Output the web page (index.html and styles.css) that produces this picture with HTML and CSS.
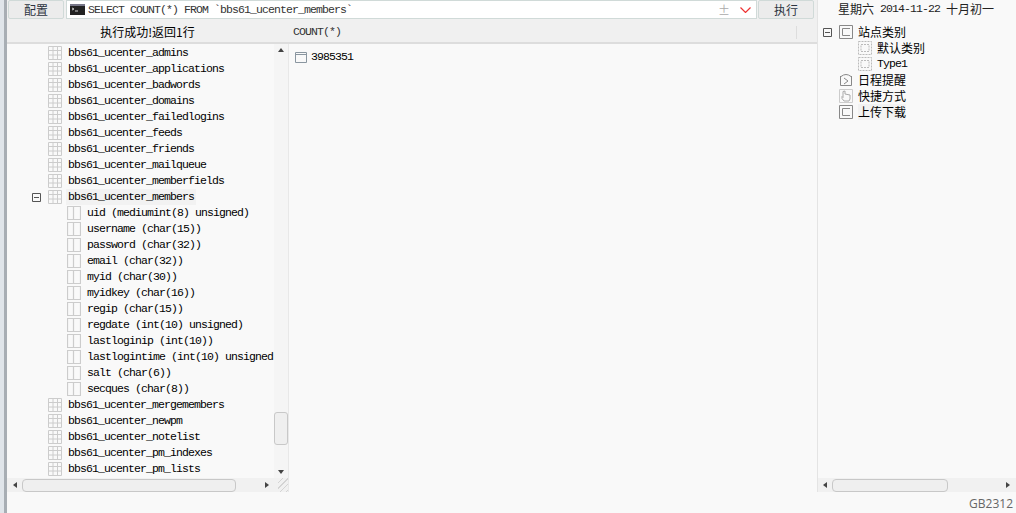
FILE: index.html
```html
<!DOCTYPE html>
<html lang="zh">
<head>
<meta charset="utf-8">
<title>SQL</title>
<link rel="stylesheet" href="styles.css">
</head>
<body>
<svg class="defs" width="0" height="0" aria-hidden="true">
  <symbol id="tbl" viewBox="0 0 14 14"><path d="M.5.5h13v13H.5zM.5 4.500h13M.5 9h13M5 .5v13M9.500.5v13" fill="none" stroke="#ccc"/></symbol>
  <symbol id="fld" viewBox="0 0 14 14"><path d="M.5.500h13v13H.5zM6.500.5v13" fill="none" stroke="#ccc" stroke-width="1.200"/></symbol>
  <symbol id="box" viewBox="0 0 14 14"><path d="M.5.500h13v13H.5zM11 3.500H3.500v7H11" fill="none" stroke="#888"/></symbol>
  <symbol id="dot" viewBox="0 0 14 14"><path d="M.5.500h13v13H.5zM3 3.500h8v7H3z" fill="none" stroke="#bbb" stroke-dasharray="2 1"/></symbol>
  <symbol id="clk" viewBox="0 0 14 14"><path d="M2 3.500Q7-.500 12 3.500M1.500 3v9.500h11V3" fill="none" stroke="#888"/><path d="M5 5l4 3-4 3" fill="none" stroke="#888"/></symbol>
  <symbol id="hand" viewBox="0 0 14 14"><path d="M.5.500h13v13H.5z" fill="none" stroke="#ccc"/><path d="M4 2.500v6l-1-1v2l2 2.500h5l1-2v-4l-5-1v-3z" fill="none" stroke="#aaa"/></symbol>
  <symbol id="minus" viewBox="0 0 9 9"><path d="M.5.500h8v8h-8zM2 4.500h5" fill="none" stroke="#555"/></symbol>
</svg>

<div class="shell">
<header class="topbar">
  <button class="btn btn-config">配置</button>
  <div class="sql">
    <svg class="term" viewBox="0 0 15 11"><rect width="15" height="11" fill="#222"/><rect width="15" height="2" fill="#778"/><path d="M2 4l2 1-2 1M5 7h3" stroke="#ccc" fill="none"/></svg>
    <span class="sql-text">SELECT COUNT(*) FROM `bbs61_ucenter_members`</span>
    <span class="sql-pm">±</span>
    <svg class="sql-arrow" viewBox="0 0 11 6"><path d="M.5.500l5 5 5-5" fill="none" stroke="#e33" stroke-width="1.200"/></svg>
  </div>
  <button class="btn btn-run">执行</button>
  <div class="date"><span>星期六</span><span class="mono">2014-11-22</span><span>十月初一</span></div>
</header>

<main class="main">
  <section class="left">
    <div class="status">执行成功!返回1行</div>
    <div class="tree-wrap">
      <div class="tree">
        <div class="row t"><svg class="i"><use href="#tbl"/></svg><span>bbs61_ucenter_admins</span></div>
        <div class="row t"><svg class="i"><use href="#tbl"/></svg><span>bbs61_ucenter_applications</span></div>
        <div class="row t"><svg class="i"><use href="#tbl"/></svg><span>bbs61_ucenter_badwords</span></div>
        <div class="row t"><svg class="i"><use href="#tbl"/></svg><span>bbs61_ucenter_domains</span></div>
        <div class="row t"><svg class="i"><use href="#tbl"/></svg><span>bbs61_ucenter_failedlogins</span></div>
        <div class="row t"><svg class="i"><use href="#tbl"/></svg><span>bbs61_ucenter_feeds</span></div>
        <div class="row t"><svg class="i"><use href="#tbl"/></svg><span>bbs61_ucenter_friends</span></div>
        <div class="row t"><svg class="i"><use href="#tbl"/></svg><span>bbs61_ucenter_mailqueue</span></div>
        <div class="row t"><svg class="i"><use href="#tbl"/></svg><span>bbs61_ucenter_memberfields</span></div>
        <div class="row t open"><svg class="minus"><use href="#minus"/></svg><svg class="i"><use href="#tbl"/></svg><span class="sel">bbs61_ucenter_members</span></div>
        <div class="row f"><svg class="i"><use href="#fld"/></svg><span>uid (mediumint(8) unsigned)</span></div>
        <div class="row f"><svg class="i"><use href="#fld"/></svg><span>username (char(15))</span></div>
        <div class="row f"><svg class="i"><use href="#fld"/></svg><span>password (char(32))</span></div>
        <div class="row f"><svg class="i"><use href="#fld"/></svg><span>email (char(32))</span></div>
        <div class="row f"><svg class="i"><use href="#fld"/></svg><span>myid (char(30))</span></div>
        <div class="row f"><svg class="i"><use href="#fld"/></svg><span>myidkey (char(16))</span></div>
        <div class="row f"><svg class="i"><use href="#fld"/></svg><span>regip (char(15))</span></div>
        <div class="row f"><svg class="i"><use href="#fld"/></svg><span>regdate (int(10) unsigned)</span></div>
        <div class="row f"><svg class="i"><use href="#fld"/></svg><span>lastloginip (int(10))</span></div>
        <div class="row f"><svg class="i"><use href="#fld"/></svg><span>lastlogintime (int(10) unsigned</span></div>
        <div class="row f"><svg class="i"><use href="#fld"/></svg><span>salt (char(6))</span></div>
        <div class="row f"><svg class="i"><use href="#fld"/></svg><span>secques (char(8))</span></div>
        <div class="row t"><svg class="i"><use href="#tbl"/></svg><span>bbs61_ucenter_mergemembers</span></div>
        <div class="row t"><svg class="i"><use href="#tbl"/></svg><span>bbs61_ucenter_newpm</span></div>
        <div class="row t"><svg class="i"><use href="#tbl"/></svg><span>bbs61_ucenter_notelist</span></div>
        <div class="row t"><svg class="i"><use href="#tbl"/></svg><span>bbs61_ucenter_pm_indexes</span></div>
        <div class="row t"><svg class="i"><use href="#tbl"/></svg><span>bbs61_ucenter_pm_lists</span></div>
        <div class="row t"><svg class="i"><use href="#tbl"/></svg></div>
      </div>
      <div class="vbar">
        <i class="arr up"></i>
        <div class="vthumb"></div>
        <i class="arr down"></i>
      </div>
    </div>
    <div class="hbar">
      <i class="arr lf"></i>
      <div class="hthumb"></div>
      <i class="arr rt"></i>
      <div class="grip"></div>
    </div>
  </section>

  <section class="mid">
    <div class="grid-head"><span class="col">COUNT(*)</span><span class="col-sep"></span></div>
    <div class="grid-body">
      <div class="cell"><svg class="cell-i" viewBox="0 0 12 12"><path d="M.5 1.500h11v10H.5zM.5 3.500h11" fill="none" stroke="#8a96a0"/></svg><span>3985351</span></div>
    </div>
  </section>

  <aside class="right">
    <div class="nav">
      <div class="nrow"><svg class="minus"><use href="#minus"/></svg><svg class="i"><use href="#box"/></svg><span>站点类别</span></div>
      <div class="nrow sub"><svg class="i"><use href="#dot"/></svg><span>默认类别</span></div>
      <div class="nrow sub"><svg class="i"><use href="#dot"/></svg><span class="mono">Type1</span></div>
      <div class="nrow"><svg class="i"><use href="#clk"/></svg><span>日程提醒</span></div>
      <div class="nrow"><svg class="i"><use href="#hand"/></svg><span>快捷方式</span></div>
      <div class="nrow"><svg class="i"><use href="#box"/></svg><span class="cur">上传下载</span></div>
    </div>
    <div class="hbar hbar-r">
      <i class="arr lf"></i>
      <div class="hthumb"></div>
      <i class="arr rt"></i>
    </div>
  </aside>
</main>

<footer class="foot">GB2312</footer>
</div>
</body>
</html>
```

FILE: styles.css
```css
* { box-sizing: border-box; }
html, body { margin: 0; height: 100%; overflow: hidden; }
body {
  width: 1016px; height: 513px;
  padding-left: 4px;
  background: #e0e5ea; color: #000;
  font: 12px/16px "Noto Sans CJK SC", sans-serif;
}
.defs { position: absolute; }
.shell {
  height: 513px;
  display: flex; flex-direction: column;
  background: #f9f9f9;
  border-left: 3px solid #a8aeb4;
}
.mono, .tree span, .col, .cell span, .sql-text {
  font-family: "Liberation Mono", "Noto Sans CJK SC", monospace;
  font-size: 11.5px; letter-spacing: -.9px;
}
.topbar { display: flex; height: 20px; align-items: flex-start; padding-left: 1px; background: #f0f0f0; }
.btn {
  height: 19px; padding: 0; font: inherit; line-height: 17px; color: #2c3440;
  background: #ececec; border: 1px solid #d0dad8; border-radius: 2px;
}
.btn-config { width: 56px; }
.sql {
  width: 691px; height: 19px; margin-left: 2px; padding: 0 4px 0 3px;
  display: flex; align-items: center;
  background: #fff; border: 1px solid #d0dad8;
}
.term { width: 15px; height: 11px; flex: none; }
.sql-text { margin-left: 3px; flex: 1; white-space: pre; color: #333; }
.sql-pm { color: #aaa; width: 22px; }
.sql-arrow { width: 11px; height: 6px; margin-right: 1px; }
.btn-run { width: 56px; margin-left: 1px; }
.date {
  flex: 1; height: 20px; margin-left: 3px; padding-left: 20px;
  display: flex; gap: 6px; white-space: nowrap; color: #222; line-height: 18px;
  background: #f9f9f9; border-left: 1px solid #e4e4e4;
}
.main { display: flex; height: 472px; }
.left { width: 281px; flex: none; display: flex; flex-direction: column; }
.status { height: 24px; line-height: 24px; text-align: center; background: #f0f0f0; border-bottom: 2px solid #ddd; }
.tree-wrap { height: 434px; display: flex; overflow: hidden; }
.tree { flex: 1; min-width: 0; overflow: hidden; white-space: nowrap; padding-top: 1px; }
.row { display: flex; align-items: center; height: 16px; position: relative; }
.row.t { padding-left: 41px; }
.row.f { padding-left: 60px; }
.i { width: 14px; height: 14px; flex: none; margin-right: 6px; }
.minus { width: 9px; height: 9px; flex: none; }
.row .minus { position: absolute; left: 25px; top: 4px; }
.row span { color: #000; }
.sel { background: #f2f2f2; padding: 0 2px; margin-left: -2px; }
.vbar { width: 14px; flex: none; display: flex; flex-direction: column; align-items: center; background: #f5f5f5; }
.vthumb { width: 14px; height: 33px; margin-top: 360px; background: #efefef; border: 1px solid #c8c8c8; border-radius: 3px; }
.arr { display: block; width: 0; height: 0; flex: none; border: 3px solid transparent; }
.arr.up { border-top: 0; border-bottom: 4px solid #444; margin-top: 4px; }
.arr.down { border-bottom: 0; border-top: 4px solid #444; margin-top: 25px; }
.arr.lf { border-left: 0; border-right: 4px solid #444; margin: 0 5px 0 6px; }
.arr.rt { border-right: 0; border-left: 4px solid #444; margin-left: 29px; }
.hbar { height: 14px; display: flex; align-items: center; background: #f1f1f1; position: relative; }
.hthumb { width: 214px; height: 13px; background: #efefef; border: 1px solid #c8c8c8; border-radius: 4px; }
.grip { position: absolute; right: 0; top: 0; width: 10px; height: 14px; background: repeating-linear-gradient(135deg, #f1f1f1 0 3px, #d4d4d4 3px 4px); }
.mid { width: 530px; flex: none; display: flex; flex-direction: column; border-right: 1px solid #e4e4e4; }
.grid-head { height: 24px; flex: none; background: #f0f0f0; border-bottom: 2px solid #ddd; display: flex; align-items: center; justify-content: space-between; padding: 2px 0 0 5px; }
.col { color: #333; }
.col-sep { width: 1px; height: 13px; background: #ddd; margin-right: 20px; }
.grid-body { flex: 1; border-left: 1px solid #e8e8e8; padding: 5px 0 0 6px; }
.cell { display: flex; align-items: center; height: 16px; }
.cell-i { width: 12px; height: 12px; margin-right: 4px; }
.right { flex: 1; min-width: 0; display: flex; flex-direction: column; }
.nav { flex: 1; padding: 4px 0 0 5px; }
.nrow { display: flex; align-items: center; height: 16px; padding-left: 16px; position: relative; }
.nrow.sub { padding-left: 35px; }
.nrow .i { margin-right: 5px; }
.nrow .minus { position: absolute; left: 0; top: 4px; }
.cur { background: #f2f2f2; }
.hbar-r .arr.lf { margin: 0 5px; }
.hbar-r .hthumb { width: 116px; }
.hbar-r .arr.rt { margin-left: 58px; }
.foot { height: 21px; text-align: right; padding: 4px 3px 0 0; color: #666; font: 12px/16px "Open Sans", sans-serif; }
```
